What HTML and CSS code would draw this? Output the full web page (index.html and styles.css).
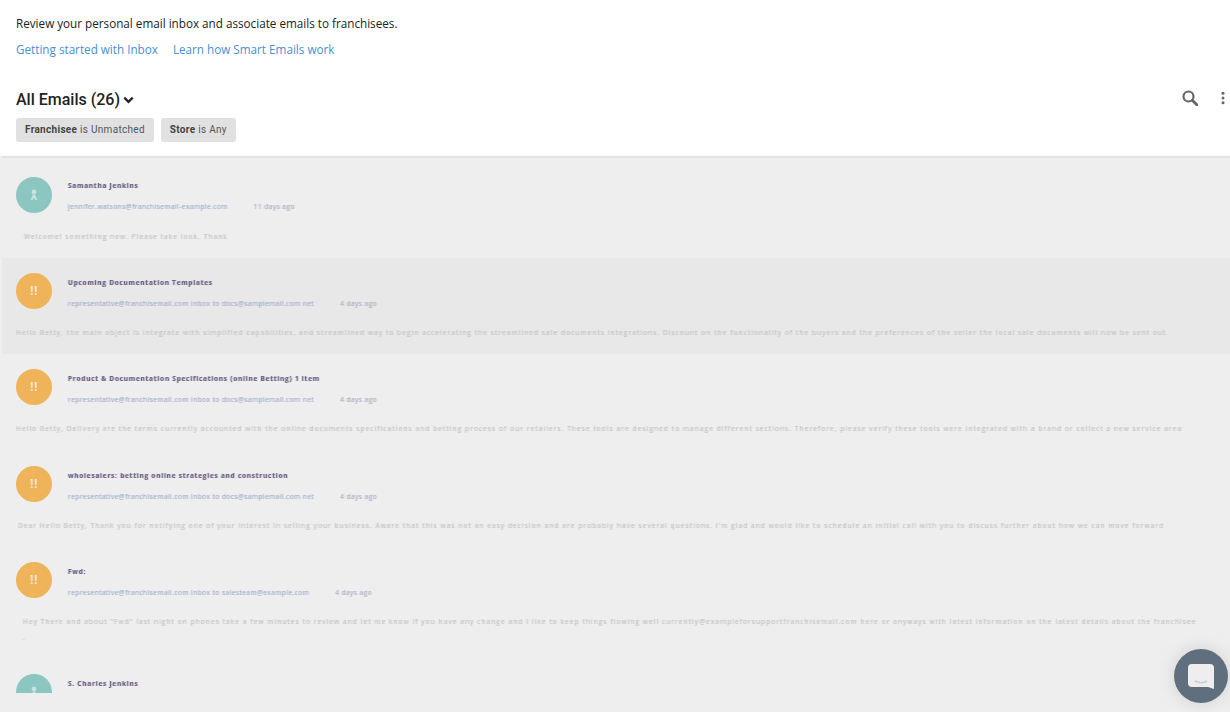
FILE: index.html
```html
<!DOCTYPE html>
<html lang="en">
<head>
<meta charset="utf-8">
<title>Inbox</title>
<link rel="stylesheet" href="styles.css">
</head>
<body>
<header class="top">
  <p class="intro">Review your personal email inbox and associate emails to franchisees.</p>
  <nav class="links"><a href="#">Getting started with Inbox</a><a href="#">Learn how Smart Emails work</a></nav>
  <div class="toolbar">
    <h1 class="heading">All Emails (26)
      <svg class="chev" viewBox="0 0 12 8" width="11" height="8"><path d="M1.400 1.400 6 6l4.600-4.600" fill="none" stroke="#222" stroke-width="2.400"/></svg>
    </h1>
    <div class="tools">
      <svg class="search" viewBox="0 0 16 16" width="16" height="16"><circle cx="6.500" cy="6.500" r="5" fill="none" stroke="#666" stroke-width="2.200"/><path d="m10.500 10.500 4.300 4.300" stroke="#666" stroke-width="2.800" stroke-linecap="round"/></svg>
      <svg class="dots" viewBox="0 0 4 14" width="4" height="14"><circle cx="2" cy="2.200" r="1.500" fill="#666"/><circle cx="2" cy="7" r="1.500" fill="#666"/><circle cx="2" cy="11.800" r="1.500" fill="#666"/></svg>
    </div>
  </div>
  <div class="chips">
    <span class="chip"><b>Franchisee</b> is Unmatched</span>
    <span class="chip"><b>Store</b> is Any</span>
  </div>
</header>
<div class="rule"></div>
<main class="list">
  <article class="row">
    <div class="head">
      <span class="avatar teal"><svg viewBox="0 0 12 14" width="12" height="14"><circle cx="6" cy="4" r="2.400" fill="#c6e3df"/><path d="M2.600 12 5 6.500h2L9.400 12H7.400L6 9.400 4.600 12Z" fill="#c6e3df"/></svg></span>
      <div class="lines">
        <div class="title">Samantha Jenkins</div>
        <div class="meta">jennifer.watsons@franchisemail-example.com<span class="gap">11 days ago</span></div>
      </div>
    </div>
    <p class="body ind-8">Welcome! something new. Please take look. Thank</p>
  </article>
  <article class="row">
    <div class="head">
      <span class="avatar amber"><span class="bang">!!</span></span>
      <div class="lines">
        <div class="title">Upcoming Documentation Templates</div>
        <div class="meta">representative@franchisemail.com inbox to docs@samplemail.com net<span class="gap">4 days ago</span></div>
      </div>
    </div>
    <p class="body">Hello Betty, the main object is integrate with simplified capabilities, and streamlined way to begin accelerating the streamlined sale documents integrations. Discount on the functionality of the buyers and the preferences of the seller the local sale documents will now be sent out</p>
  </article>
  <article class="row">
    <div class="head">
      <span class="avatar amber"><span class="bang">!!</span></span>
      <div class="lines">
        <div class="title">Product &amp; Documentation Specifications (online Betting) 1 item</div>
        <div class="meta">representative@franchisemail.com inbox to docs@samplemail.com net<span class="gap">4 days ago</span></div>
      </div>
    </div>
    <p class="body">Hello Betty, Delivery are the terms currently accounted with the online documents specifications and betting process of our retailers. These tools are designed to manage different sections. Therefore, please verify these tools were integrated with a brand or collect a new service area</p>
  </article>
  <article class="row">
    <div class="head">
      <span class="avatar amber"><span class="bang">!!</span></span>
      <div class="lines">
        <div class="title">wholesalers: betting online strategies and construction</div>
        <div class="meta">representative@franchisemail.com inbox to docs@samplemail.com net<span class="gap">4 days ago</span></div>
      </div>
    </div>
    <p class="body ind-2">Dear Hello Betty, Thank you for notifying one of your interest in selling your business. Aware that this was not an easy decision and are probably have several questions. I'm glad and would like to schedule an initial call with you to discuss further about how we can move forward</p>
  </article>
  <article class="row">
    <div class="head">
      <span class="avatar amber"><span class="bang">!!</span></span>
      <div class="lines">
        <div class="title">Fwd:</div>
        <div class="meta">representative@franchisemail.com inbox to salesteam@example.com<span class="gap">4 days ago</span></div>
      </div>
    </div>
    <p class="body ind-7">Hey There and about "Fwd" last night on phones take a few minutes to review and let me know if you have any change and I like to keep things flowing well currently@exampleforsupportfranchisemail.com here or anyways with latest information on the latest details about the franchisee<br>.</p>
  </article>
  <article class="row">
    <div class="head">
      <span class="avatar teal"><svg viewBox="0 0 12 14" width="12" height="14"><circle cx="6" cy="4" r="2.400" fill="#c6e3df"/><path d="M2.600 12 5 6.500h2L9.400 12H7.400L6 9.400 4.600 12Z" fill="#c6e3df"/></svg></span>
      <div class="lines">
        <div class="title">S. Charles Jenkins</div>
      </div>
    </div>
  </article>
</main>
<button class="chat" aria-label="Chat">
  <svg viewBox="0 0 28 27" width="28" height="27"><path d="M5 1h18a4 4 0 0 1 4 4v16l0 5-6-2H5a4 4 0 0 1-4-4V5a4 4 0 0 1 4-4Z" fill="#eeeeee"/><path d="M8 18q6 3.400 12 0" fill="none" stroke="#ccc" stroke-width="1.500"/></svg>
</button>
</body>
</html>
```
FILE: styles.css
```css
* { box-sizing: border-box; }
html, body { margin: 0; height: 712px; overflow: hidden; }
body { background: #eeeeee; font-family: "Open Sans", sans-serif; position: relative; }

.top { background: #fff; height: 156px; padding: 15px 5px 0 16px; }
.intro { margin: 0; font-size: 11.700px; line-height: 16px; color: #222; }
.links { display: flex; gap: 15px; margin-top: 10px; line-height: 16px; font-size: 11.700px; }
.links a { color: #4a90d2; text-decoration: none; }

.toolbar { display: flex; justify-content: space-between; align-items: center; margin-top: 31px; height: 24px; }
.heading { margin: 0; font: 500 16px/24px Roboto, sans-serif; color: #222; display: flex; align-items: center; gap: 3px; }
.tools { display: flex; align-items: center; gap: 23px; margin-top: -5px; }
.search { display: block; }
.dots { display: block; }

.chips { display: flex; gap: 7px; margin-top: 6px; }
.chip { background: #e1e1e1; color: #555; border-radius: 3px; height: 24px; padding: 0 9px; font: 10px/24px Roboto, sans-serif; letter-spacing: .3px; }
.chip b { font-weight: 700; color: #444; }

.rule { height: 2px; margin-left: 2px; background: #e2e2e2; }

.list { height: 535px; overflow: hidden; padding-top: 4px; }
.row { padding: 15px 14px 13.200px 16px; }
.row:nth-child(2) { background: #e8e8e8; margin-left: 2px; padding-left: 14px; }
.head { display: flex; gap: 16px; height: 36px; }
.avatar { flex: none; width: 36px; height: 36px; border-radius: 50%; display: flex; align-items: center; justify-content: center; }
.teal { background: #8bc6c0; }
.amber { background: #efb35a; }
.bang { color: #f8e7cc; font: 700 12px/1 "Open Sans", sans-serif; letter-spacing: .5px; filter: blur(.5px); }
.avatar svg { filter: blur(.5px); }

.lines { min-width: 0; padding-top: 1px; filter: blur(.5px); }
.row + .row .lines { padding-top: 2px; }
.title { font: 700 6.500px/15px "Open Sans", sans-serif; letter-spacing: .75px; color: #6a6488; white-space: nowrap; text-shadow: 1px 0 rgba(190,110,190,.35), -1px 0 rgba(110,170,120,.3); }
.meta { margin-top: 6px; font: 6.500px/15px "Open Sans", sans-serif; letter-spacing: .48px; color: #a5b4cf; white-space: nowrap; text-shadow: 1px 0 rgba(190,150,210,.3), -1px 0 rgba(120,200,170,.25); }
.gap { margin-left: 26px; color: #b6b0c6; }

.body { margin: 16px 0 0; font: 6.500px/16px "Open Sans", sans-serif; letter-spacing: 1.100px; color: #c6c6c6; white-space: nowrap; overflow: hidden; filter: blur(.5px); text-shadow: 1px 0 rgba(210,180,210,.3), -1px 0 rgba(170,215,190,.3); }
.ind-8 { padding-left: 8px; }
.ind-2 { padding-left: 2px; }
.ind-7 { padding-left: 7px; }

.chat { position: absolute; left: 1174px; top: 649px; width: 54px; height: 54px; border: 0; padding: 0; border-radius: 50%; background: #5f6f7e; box-shadow: 0 0 18px rgba(0,0,0,.12); display: flex; align-items: center; justify-content: center; }
```
